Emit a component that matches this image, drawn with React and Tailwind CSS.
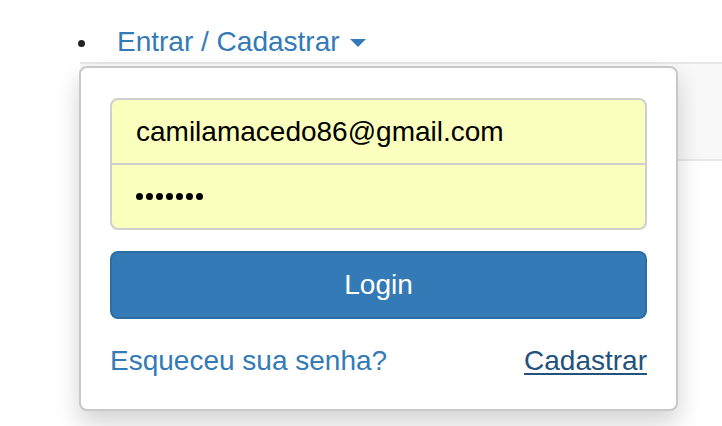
export default function App() {
  const font = { fontFamily: '"Liberation Sans", Arial, Helvetica, sans-serif' };
  return (
    <div className="relative w-[722px] h-[426px] bg-white overflow-hidden" style={font}>
      <div className="flex items-center h-[62px] pt-[22px]">
        <div className="ml-[78px] mt-[3px] w-[7px] h-[7px] rounded-full bg-[#222]" />
        <a className="ml-[32px] text-[28px] leading-[40px] text-[#337ab7] flex items-center">
          Entrar / Cadastrar
          <span className="ml-[10px] mt-[2px] w-0 h-0 border-l-[8px] border-r-[8px] border-t-[8px] border-l-transparent border-r-transparent border-t-[#337ab7]" />
        </a>
      </div>
      <div className="ml-[80px] h-[99px] bg-[#f8f8f8] border-t-[2px] border-b-[2px] border-[#e7e7e7]" />

      <div className="absolute left-[79px] top-[66px] w-[599px] h-[345px] bg-white border-[2px] border-[#c8c8c8] rounded-[8px] shadow-[0_12px_24px_rgba(0,0,0,0.175)] px-[29px] pt-[30px]">
        <div className="flex flex-col">
          <div className="h-[67px] bg-[#faffbd] border-[2px] border-[#cfcfcf] rounded-t-[8px] flex items-center px-[24px] text-[28px] text-black">
            camilamacedo86@gmail.com
          </div>
          <div className="h-[67px] -mt-[2px] bg-[#faffbd] border-[2px] border-[#cfcfcf] rounded-b-[8px] flex items-center px-[24px] text-[28px] text-black">
            <div className="flex gap-[3px]">
              {Array.from({ length: 7 }).map((_, i) => (
                <span key={i} className="w-[7px] h-[7px] rounded-full bg-black" />
              ))}
            </div>
          </div>
        </div>
        <button className="mt-[21px] w-full h-[68px] bg-[#337ab7] border-[2px] border-[#2e6da4] rounded-[8px] text-white text-[28px] flex items-center justify-center">
          Login
        </button>
        <div className="mt-[22px] flex justify-between items-center text-[28px] leading-[40px]">
          <a className="text-[#337ab7]">Esqueceu sua senha?</a>
          <a className="text-[#23527c] underline decoration-[2px] underline-offset-[3px]">Cadastrar</a>
        </div>
      </div>
    </div>
  );
}
